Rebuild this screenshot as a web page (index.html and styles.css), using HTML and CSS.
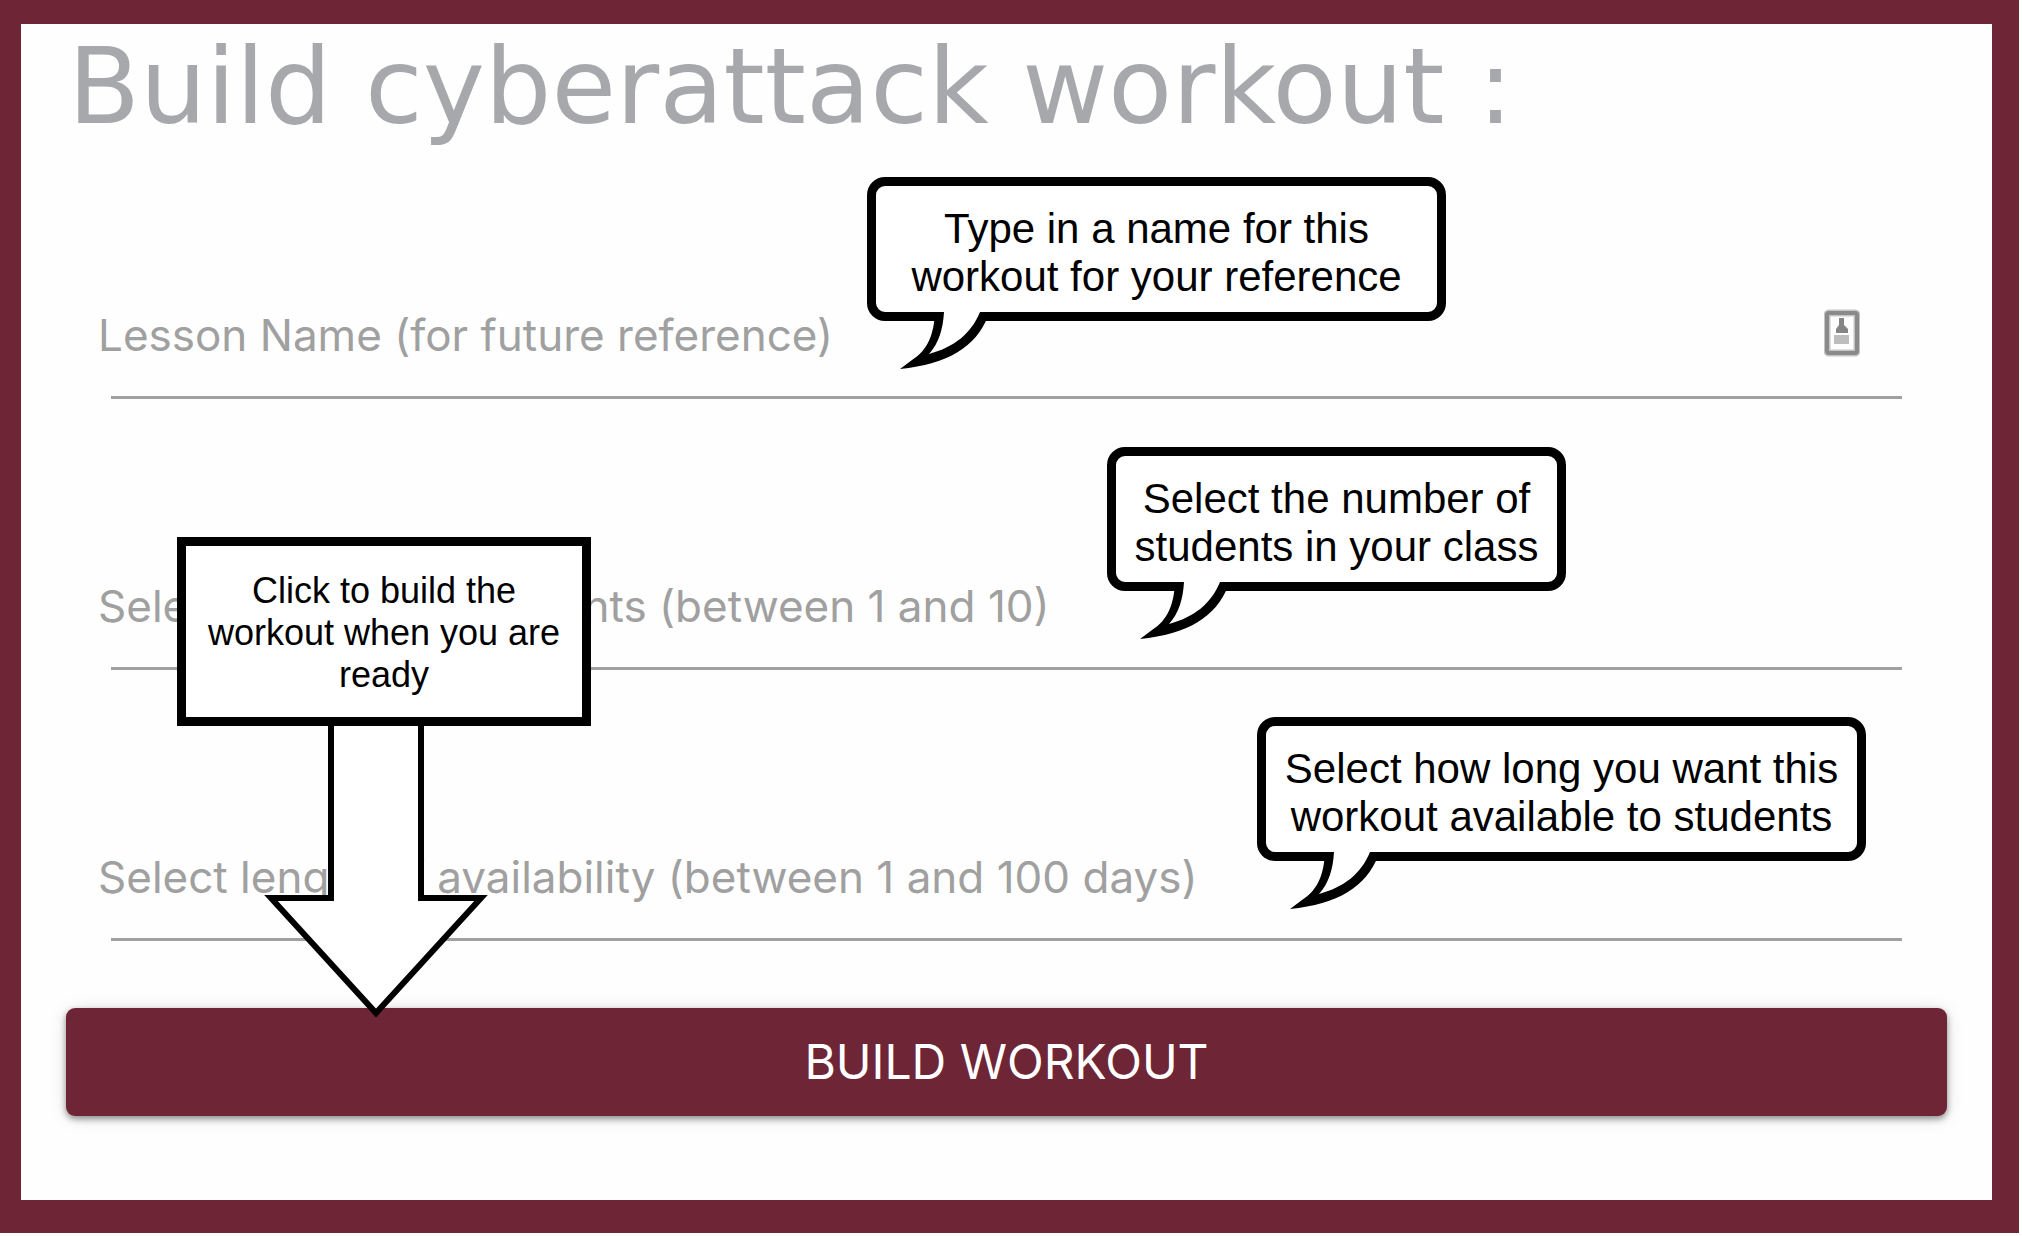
FILE: index.html
```
<!DOCTYPE html>
<html lang="en">
<head>
  <meta charset="utf-8">
  <meta name="viewport" content="width=device-width, initial-scale=1">
  <title>Build cyberattack workout</title>
  <link rel="stylesheet" href="styles.css">
</head>
<body>
  <svg class="defs" aria-hidden="true">
    <symbol id="tail" viewBox="0 0 90 58">
      <path fill="#000" d="M35 0C34 22 28 38 12 48L0 57C48 52 76 35 88 4L89 0Z"/>
      <path fill="#fff" d="M44 0C43 17 39 31 29 42C54 35 71 22 80 0Z"/>
    </symbol>
  </svg>

  <main class="frame">
    <form class="workout">
      <h1 class="title">Build cyberattack workout :</h1>

      <div class="fields">
        <div class="field">
          <label class="field-label" for="lesson-name">Lesson Name (for future reference)</label>
          <input class="field-input" id="lesson-name" type="text">
          <svg class="contact-icon" width="36" height="48" viewBox="0 0 36 48" aria-hidden="true">
            <rect x="3" y="4" width="30" height="40" rx="2" fill="none" stroke="#c4c4c4" stroke-width="7"/>
            <rect x="3" y="4" width="30" height="40" rx="2" fill="none" stroke="#8a8a8a" stroke-width="4"/>
            <path fill="#858585" d="M15 9h5v7l4 4v4H12v-4l3-4z"/>
            <path fill="#bdbdbd" d="M10 26h15v9H10z"/>
          </svg>
        </div>
        <div class="field">
          <label class="field-label" for="student-count">Select number of students (between 1 and 10)</label>
          <input class="field-input" id="student-count" type="text" inputmode="numeric">
        </div>
        <div class="field">
          <label class="field-label" for="day-count">Select length of availability (between 1 and 100 days)</label>
          <input class="field-input" id="day-count" type="text" inputmode="numeric">
        </div>
      </div>

      <button class="submit" type="submit">BUILD WORKOUT</button>
    </form>

    <aside class="callout callout-name">
      Type in a name for this<br>workout for your reference
      <svg class="tail" aria-hidden="true"><use href="#tail"/></svg>
    </aside>
    <aside class="callout callout-students">
      Select the number of<br>students in your class
      <svg class="tail" aria-hidden="true"><use href="#tail"/></svg>
    </aside>
    <aside class="callout callout-days">
      Select how long you want this<br>workout available to students
      <svg class="tail" aria-hidden="true"><use href="#tail"/></svg>
    </aside>

    <svg class="arrow" width="226" height="300" viewBox="0 0 226 300" aria-hidden="true">
      <path fill="#fff" stroke="#000" stroke-width="6" stroke-miterlimit="10" d="M68 0V178H8L113 293L218 178H158V0"/>
    </svg>
    <aside class="note">Click to build the<br>workout when you are<br>ready</aside>
  </main>
</body>
</html>
```
FILE: styles.css
```
* {
  box-sizing: border-box;
}

body {
  margin: 0;
  padding: 0 3px 3px 0;
  background: #fff;
  font-family: "Liberation Sans", Arial, sans-serif;
}

.defs {
  display: none;
}

.frame {
  position: relative;
  border: solid #6e2637;
  border-width: 24px 27px 33px 21px;
  background: #fefefe;
}

.workout {
  display: flex;
  flex-direction: column;
  padding: 3px 45px 84px;
}

.title {
  margin: 0;
  padding-left: 2px;
  color: #a7a8ab;
  font: 400 105px/120px "DejaVu Sans", sans-serif;
}

.fields {
  display: grid;
  gap: 179px;
  margin: 160px 0 67px;
}

.field {
  display: grid;
  height: 92px;
}

.field > * {
  grid-area: 1 / 1;
}

.field-label {
  padding-left: 32px;
  color: #a0a0a0;
  font: 400 44px/56px Inter, sans-serif;
  pointer-events: none;
}

.field-input {
  width: auto;
  margin: 0 45px;
  padding: 0;
  border: 0;
  border-bottom: 3px solid #a0a0a0;
  background: none;
  font: 400 44px/56px Inter, sans-serif;
}

.contact-icon {
  justify-self: end;
  margin: 2px 87px 0 0;
}

.submit {
  height: 108px;
  border: 0;
  border-radius: 9px;
  background: #6e2637;
  box-shadow: 0 3px 6px rgba(0, 0, 0, 0.4), 0 2px 18px rgba(0, 0, 0, 0.12);
  color: #fff;
  font: 400 48px/56px Inter, sans-serif;
}

/* Guidance laid over the form */
.callout,
.note,
.arrow {
  position: absolute;
  z-index: 1;
}

.callout,
.note {
  border: 9px solid #000;
  background: #fff;
  color: #000;
  text-align: center;
  white-space: nowrap;
}

.callout {
  height: 144px;
  padding-top: 19px;
  border-radius: 18px;
  font-size: 42px;
  line-height: 48px;
}

.callout-name {
  left: 846px;
  top: 153px;
  width: 579px;
}

.callout-students {
  left: 1086px;
  top: 423px;
  width: 459px;
}

.callout-days {
  left: 1236px;
  top: 693px;
  width: 609px;
}

.tail {
  position: absolute;
  left: 24px;
  top: 126px;
  width: 90px;
  height: 58px;
}

.note {
  left: 156px;
  top: 513px;
  width: 414px;
  height: 189px;
  padding-top: 24px;
  font-size: 36px;
  line-height: 42px;
}

.arrow {
  left: 242px;
  top: 696px;
}
```
